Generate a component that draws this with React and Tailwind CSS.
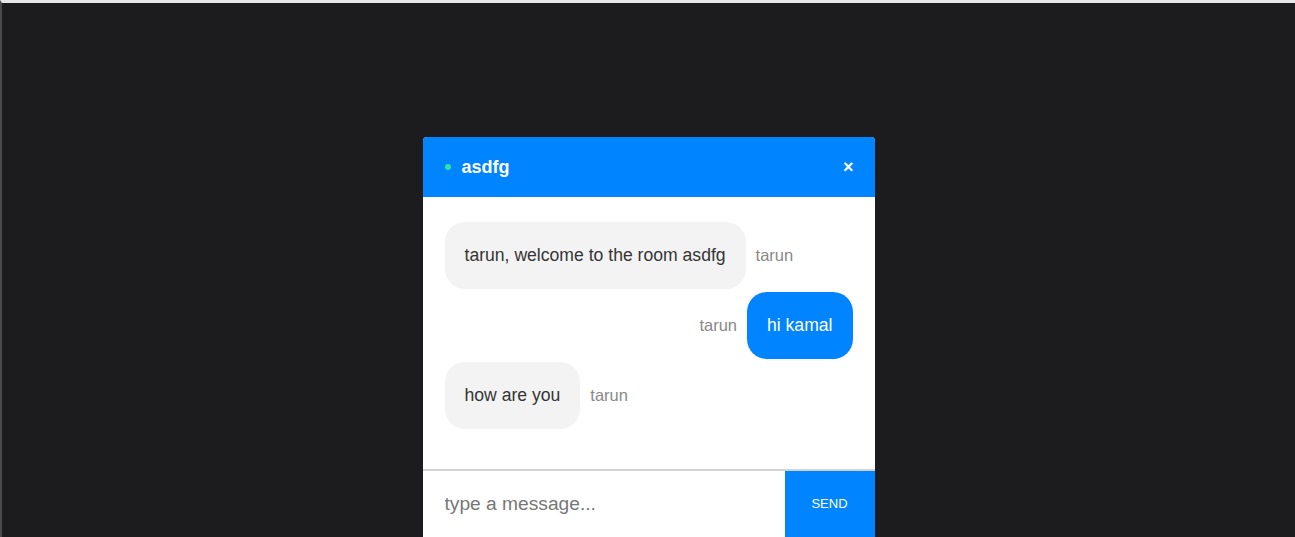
import React, { useState } from 'react';

const messages = [
  { id: 1, text: 'tarun, welcome to the room asdfg', user: 'tarun', mine: false },
  { id: 2, text: 'hi kamal', user: 'tarun', mine: true },
  { id: 3, text: 'how are you', user: 'tarun', mine: false },
];

export default function App() {
  const [draft, setDraft] = useState('');

  return (
    <div className="h-screen w-full overflow-hidden bg-[#1c1c1e] border-t-[3px] border-t-[#e6e6e8] border-l-2 border-l-[#4a4a4c] font-['Liberation_Sans',Arial,sans-serif]">
      <div className="flex justify-center pt-[136px]">
        <div className="w-[452px] rounded-t-[4px] overflow-hidden bg-white">
          {/* Header */}
          <div className="h-[60px] bg-[#0084ff] flex items-center justify-between pl-[22px] pr-[21px]">
            <div className="flex items-center gap-[11px]">
              <span className="w-[6px] h-[6px] rounded-full bg-[#2de3a4]"></span>
              <span className="text-white font-bold text-[18px] leading-none -mt-[1px]">asdfg</span>
            </div>
            <button type="button" className="text-white font-bold text-[18px] leading-none">×</button>
          </div>

          {/* Messages */}
          <div className="h-[272px] px-[22px] pt-[25px] flex flex-col gap-[3px]">
            {messages.map((m) => (
              <div key={m.id} className={`flex items-center gap-[10px] ${m.mine ? 'justify-end' : 'justify-start'}`}>
                {m.mine && <span className="text-[16.5px] text-[#888888]">{m.user}</span>}
                <div
                  className={`rounded-[20px] px-5 py-[23px] leading-[21px] text-[17.6px] ${m.mine ? 'bg-[#0084ff] text-white' : 'bg-[#f3f3f3] text-[#353535]'}`}
                >
                  {m.text}
                </div>
                {!m.mine && <span className="text-[16.5px] text-[#888888]">{m.user}</span>}
              </div>
            ))}
          </div>

          {/* Input */}
          <div className="border-t-2 border-[#d3d3d3] flex h-[68px]">
            <input
              autoFocus
              value={draft}
              onChange={(e) => setDraft(e.target.value)}
              placeholder="type a message..."
              className="flex-1 min-w-0 pl-[22px] text-[19.2px] text-[#333] placeholder-[#777777] outline-none bg-white"
            />
            <button type="button" className="w-[90px] bg-[#0084ff] text-white text-[13px] uppercase">
              Send
            </button>
          </div>
        </div>
      </div>
    </div>
  );
}
